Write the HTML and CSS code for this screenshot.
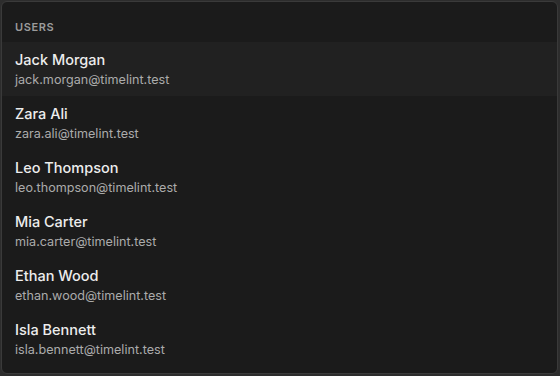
FILE: index.html
```html
<!DOCTYPE html>
<html>
<head>
  <title>Users</title>
<link rel="stylesheet" href="styles.css">
</head>
<body>
  <div class="panel">
    <div class="panel_head">USERS</div>
    <ul class="user_list">
      <li class="user active">
        <div class="user_name">Jack Morgan</div>
        <div class="user_mail">jack.morgan@timelint.test</div>
      </li>
      <li class="user">
        <div class="user_name">Zara Ali</div>
        <div class="user_mail">zara.ali@timelint.test</div>
      </li>
      <li class="user">
        <div class="user_name">Leo Thompson</div>
        <div class="user_mail">leo.thompson@timelint.test</div>
      </li>
      <li class="user">
        <div class="user_name">Mia Carter</div>
        <div class="user_mail">mia.carter@timelint.test</div>
      </li>
      <li class="user">
        <div class="user_name">Ethan Wood</div>
        <div class="user_mail">ethan.wood@timelint.test</div>
      </li>
      <li class="user">
        <div class="user_name">Isla Bennett</div>
        <div class="user_mail">isla.bennett@timelint.test</div>
      </li>
    </ul>
  </div>
</body>
</html>
```

FILE: styles.css
```css
html, body {
  height: 100%;
}
body {
  margin: 0;
  background-color: #2d2d2d;
  font-family: Inter, "Noto Sans", sans-serif;
}
.panel {
  box-sizing: border-box;
  height: calc(100% - 3px);
  margin: 1px 2px 2px 1px;
  border: 1px solid #3a3a3a;
  border-radius: 6px;
  background-color: #1b1b1b;
  overflow: hidden;
}
.panel_head {
  padding: 17px 13px 7px;
  font-size: 11px;
  line-height: 16px;
  font-weight: 600;
  letter-spacing: 0.6px;
  color: #9b9b9b;
}
.user_list {
  list-style: none;
  margin: 0;
  padding: 0;
}
.user {
  padding: 9px 13px 8px;
}
.user.active {
  background-color: #212121;
}
.user_name {
  font-size: 14.5px;
  line-height: 18px;
  font-weight: 500;
  color: #ededed;
}
.user_mail {
  margin-top: 3px;
  font-size: 12.6px;
  line-height: 16px;
  color: #ababab;
}
```
